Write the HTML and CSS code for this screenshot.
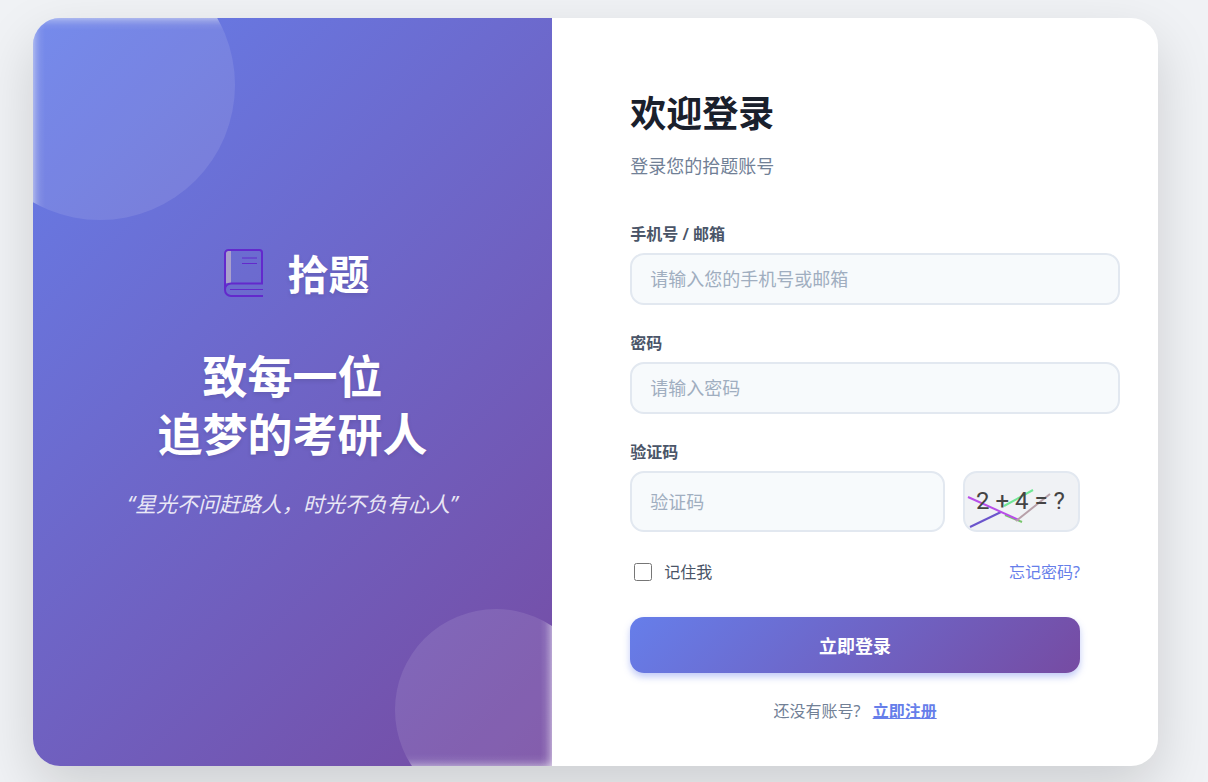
FILE: index.html
```html
<!DOCTYPE html>
<html lang="zh-CN">
<head>
    <meta charset="UTF-8">
    <meta name="viewport" content="width=device-width, initial-scale=1.0">
    <title>拾题 - 登录</title>
    <link rel="stylesheet" href="styles.css">
</head>
<body>
    <div class="login-container">
        <div class="left-section">
            <div class="circle circle-top"></div>
            <div class="circle circle-bottom"></div>

            <div class="logo">
                <svg class="logo-icon" viewBox="0 0 56 56" aria-hidden="true">
                    <path class="spine" d="M10 5h5v32h-5z"/>
                    <path d="M46 38V6.500a2.500 2.500 0 0 0-2.500-2.500H12.500a3.500 3.500 0 0 0-3.500 3.500V44"/>
                    <path d="M47 37.500H15a6 6 0 0 0-6 6.500a6 6 0 0 0 6 6h32"/>
                    <path class="thin" d="M14 43.500h33M26 12h15M26 17.500h15"/>
                </svg>
                <span class="logo-text">拾题</span>
            </div>

            <h2 class="slogan">致每一位<br>追梦的考研人</h2>
            <p class="quote">“星光不问赶路人，时光不负有心人”</p>
        </div>

        <div class="right-section">
            <h1>欢迎登录</h1>
            <p class="subtitle">登录您的拾题账号</p>

            <form>
                <div class="form-group">
                    <label for="account">手机号 / 邮箱</label>
                    <input class="text-input" type="text" id="account" placeholder="请输入您的手机号或邮箱">
                </div>

                <div class="form-group">
                    <label for="password">密码</label>
                    <input class="text-input" type="password" id="password" placeholder="请输入密码">
                </div>

                <div class="form-group">
                    <label for="captcha">验证码</label>
                    <div class="captcha-row">
                        <input class="text-input captcha-input" type="text" id="captcha" placeholder="验证码">
                        <button class="captcha-image" type="button">
                            <svg viewBox="0 0 113 57">
                                <path stroke="#6b55cc" d="M5 54L36 39"/>
                                <path stroke="#77c66a" d="M40 42L57 49"/>
                                <path stroke="#b84fe8" d="M3 24L54 47"/>
                                <path stroke="#70e695" d="M39 33L68 17"/>
                                <path stroke="#b7a0a9" d="M51 48L85 21"/>
                                <text x="11" y="36">2 + 4 = ?</text>
                            </svg>
                        </button>
                    </div>
                </div>

                <div class="options">
                    <label class="remember"><input type="checkbox">记住我</label>
                    <a href="#">忘记密码?</a>
                </div>

                <button class="login-btn" type="submit">立即登录</button>
            </form>

            <p class="register">还没有账号? <a href="#">立即注册</a></p>
        </div>
    </div>
</body>
</html>
```

FILE: styles.css
```css
body {
    margin: 0;
    padding: 18px 50px 16px 33px;
    background-color: #f0f2f5;
    font-family: "Noto Sans", "Noto Sans CJK SC", sans-serif;
    font-size: 16px;
    line-height: 24px;
}

h1, h2, p {
    margin: 0;
}

a {
    color: #667eea;
    text-decoration: none;
}

.login-container {
    display: grid;
    grid-template-columns: 6fr 7fr;
    background-color: #fff;
    border-radius: 27px;
    overflow: hidden;
    box-shadow: 0 22px 56px rgba(0, 0, 0, 0.15);
}

/* Left side */
.left-section {
    position: relative;
    overflow: hidden;
    display: flex;
    flex-direction: column;
    align-items: center;
    justify-content: center;
    background: linear-gradient(135deg, #667eea 0%, #764ba2 100%);
    color: #fff;
    text-align: center;
}

.circle {
    position: absolute;
    border-radius: 50%;
    background-color: rgba(255, 255, 255, 0.1);
}

/* The glow runs along the panel edges */
.circle-top {
    top: -68px;
    left: -68px;
    width: 270px;
    height: 270px;
    background-image:
        linear-gradient(to right, rgba(240, 242, 245, 0.45) 68px, rgba(240, 242, 245, 0.25) 71px, rgba(240, 242, 245, 0.08) 75px, transparent 80px),
        linear-gradient(to bottom, rgba(240, 242, 245, 0.45) 68px, rgba(240, 242, 245, 0.25) 71px, rgba(240, 242, 245, 0.08) 75px, transparent 80px);
}

.circle-bottom {
    right: -45px;
    bottom: -45px;
    width: 202px;
    height: 202px;
    background-image:
        linear-gradient(to left, rgba(255, 255, 255, 0.45) 45px, rgba(255, 255, 255, 0.25) 48px, rgba(255, 255, 255, 0.08) 52px, transparent 57px),
        linear-gradient(to top, rgba(240, 242, 245, 0.4) 45px, rgba(240, 242, 245, 0.22) 48px, rgba(240, 242, 245, 0.06) 52px, transparent 57px);
}

.logo {
    display: flex;
    align-items: center;
    gap: 16px;
    height: 60px;
    margin-bottom: 44px;
}

.logo-icon {
    width: 56px;
    height: 56px;
    fill: none;
    stroke: #6329cc;
    stroke-width: 2;
}

.logo-icon .spine {
    fill: #aaa0cc;
    stroke: none;
}

.logo-icon .thin {
    stroke-width: 1;
}

.logo-text {
    font-size: 41px;
    line-height: 60px;
    font-weight: 700;
    text-shadow: 0 2px 4px rgba(0, 0, 0, 0.1);
}

.slogan {
    font-size: 45px;
    line-height: 58px;
    font-weight: 700;
    text-shadow: 0 2px 4px rgba(0, 0, 0, 0.1);
    margin-bottom: 22px;
}

.quote {
    font-size: 21px;
    line-height: 36px;
    font-style: italic;
    opacity: 0.85;
    margin-bottom: 18px;
}

/* Right side */
.right-section {
    padding: 72px 78px 43px;
}

h1 {
    font-size: 36px;
    line-height: 48px;
    color: #1a202c;
    margin-bottom: 14px;
}

.subtitle {
    font-size: 18px;
    line-height: 28px;
    color: #718096;
    margin-bottom: 43px;
}

.form-group {
    margin-bottom: 27px;
}

.form-group label {
    display: block;
    margin-bottom: 8px;
    line-height: 22px;
    font-weight: 600;
    color: #4a5568;
}

.text-input {
    width: 100%;
    height: 48px;
    padding: 0 18px;
    border: 2px solid #e2e8f0;
    border-radius: 14px;
    background-color: #f7fafc;
    font-family: inherit;
    font-size: 18px;
}

.text-input::placeholder {
    color: #a0aec0;
}

.captcha-row {
    display: flex;
    gap: 18px;
}

.captcha-input {
    box-sizing: border-box;
    flex: 1;
    min-width: 0;
    height: 61px;
}

.captcha-image {
    width: 117px;
    height: 61px;
    padding: 0;
    border: 2px solid #e2e8f0;
    border-radius: 14px;
    background-color: #f0f2f5;
    cursor: pointer;
}

.captcha-image svg {
    display: block;
    width: 100%;
    fill: none;
    stroke-width: 2;
}

.captcha-image text {
    fill: #444;
    font-family: Roboto, sans-serif;
    font-size: 24px;
}

.options {
    display: flex;
    justify-content: space-between;
    align-items: center;
    line-height: 26px;
    margin-bottom: 32px;
}

.remember {
    display: flex;
    align-items: center;
    gap: 12px;
    color: #4a5568;
}

.remember input {
    width: 18px;
    height: 18px;
    margin: 0 0 0 4px;
}

.login-btn {
    display: block;
    width: 100%;
    height: 56px;
    border: none;
    border-radius: 14px;
    background: linear-gradient(135deg, #667eea 0%, #764ba2 100%);
    box-shadow: 0 4px 7px rgba(102, 126, 234, 0.4);
    color: #fff;
    font-family: inherit;
    font-size: 18px;
    font-weight: 700;
    cursor: pointer;
}

.register {
    margin-top: 26px;
    text-align: center;
    color: #718096;
}

.register a {
    margin-left: 8px;
    font-weight: 600;
    text-decoration: underline;
}
```
